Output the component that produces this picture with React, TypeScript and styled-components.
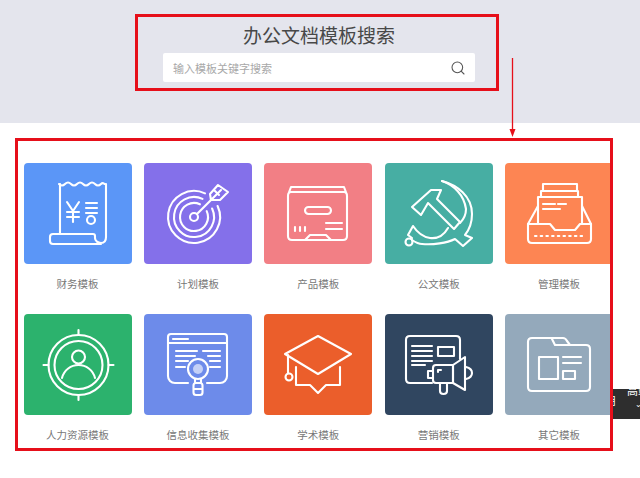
import React from "react";
import styled, { createGlobalStyle } from "styled-components";
import { Search } from "lucide-react";

const Global = createGlobalStyle`
  html, body { margin: 0; padding: 0; background: #fff; }
  body { font-family: "Noto Sans CJK SC", "Liberation Sans", sans-serif; }
`;

const Page = styled.div`
  position: relative;
  width: 640px;
  height: 478px;
  overflow: hidden;
  background: #fff;
`;

const HeaderBand = styled.header`
  height: 123px;
  box-sizing: border-box;
  padding: 14px 0 0 135px;
  background: #e4e5ed;
`;

const SearchFrame = styled.div`
  width: 364px;
  height: 77px;
  box-sizing: border-box;
  border: 3px solid #e60f1a;
  padding: 2px 21px 0 25px;
  display: flex;
  flex-direction: column;
  align-items: stretch;
`;

const Title = styled.h1`
  margin: 0;
  height: 34px;
  font-size: 19px;
  font-weight: 400;
  line-height: 31px;
  text-align: center;
  color: #484848;
`;

const SearchBox = styled.div`
  height: 29px;
  display: flex;
  align-items: center;
  justify-content: space-between;
  padding: 0 9px 0 10px;
  background: #fff;
  border-radius: 2px;
  color: #555;
`;

const Placeholder = styled.span`
  font-size: 11px;
  color: #a8a8a8;
`;

const Panel = styled.section`
  margin: 15px 0 0 15px;
  width: 598px;
  height: 313px;
  box-sizing: border-box;
  border: 3px solid #e60f1a;
  padding: 22px 0 0 5.5px;
  overflow: hidden;
  background: #fff;
`;

const Grid = styled.div`
  display: grid;
  grid-template-columns: repeat(5, 108px);
  column-gap: 12.4px;
  row-gap: 10px;
  width: 640px;
`;

const Item = styled.div`
  display: flex;
  flex-direction: column;
`;

const Tile = styled.div<{ $bg: string }>`
  width: 108px;
  height: 101px;
  border-radius: 4px;
  background: ${(p) => p.$bg};
`;

const Label = styled.div`
  height: 40px;
  line-height: 40px;
  text-align: center;
  font-size: 10.5px;
  color: #777;
`;

const Glyph = styled.svg`
  display: block;
  width: 108px;
  height: 101px;
  fill: none;
  stroke: #fff;
  stroke-width: 2.1;
  stroke-linecap: round;
  stroke-linejoin: round;
`;

const Arrow = styled.svg`
  position: absolute;
  left: 507px;
  top: 58px;
  width: 12px;
  height: 80px;
`;

const Chip = styled.div`
  position: absolute;
  left: 613px;
  top: 389px;
  width: 27px;
  height: 30px;
  background: #2e2e2e;
  color: #fff;
  font-size: 11px;
  line-height: 11px;
  overflow: hidden;
  display: flex;
`;

const ChipSide = styled.span`
  margin: 6px 0 0 -8px;
  width: 11px;
  flex: none;
`;

const ChipMain = styled.span`
  margin-top: -4px;
  padding-left: 11px;
  white-space: nowrap;
`;

const ChipCaret = styled.span`
  display: block;
  margin: 4px 0 0 8px;
  font-size: 8px;
  line-height: 8px;
`;

const Icons: Record<string, React.ReactNode> = {
  finance: (
    <Glyph viewBox="0 0 108 101">
      <path d="M35 21c2 2 4 2 6 0s4-2 6 0 4 2 6 0 4-2 6 0 4 2 6 0 4-2 6 0 4 2 6 0 3 0 4 0" />
      <path d="M36 21v50M82 21v53c0 4-2 6-5 6s-6-2-6-5v-2c0-1-1-2-2-2H29c-2 0-3 1-3 3v4c0 2 1 3 3 3h48" />
      <path d="M43 39l6 9 6-9M49 48v11M43 49h12M43 54h12" />
      <path d="M62 40h11M62 45h11M62 50h11" />
      <circle cx="67" cy="57" r="4" />
    </Glyph>
  ),
  plan: (
    <Glyph viewBox="0 0 108 101">
      <path d="M73.600 43A26 26 0 1 1 61 30.400" />
      <path d="M68.100 45.500A20 20 0 1 1 58.500 35.900" />
      <path d="M62.700 48.100A14 14 0 1 1 55.900 41.300" />
      <circle cx="50" cy="54" r="4" />
      <path d="M53 51l14-14" />
      <path d="M67 37l-1-6 8-9 10 7-8 8zM67 37l10-10M70 27l5 5" />
    </Glyph>
  ),
  product: (
    <Glyph viewBox="0 0 108 101">
      <path d="M24 33c0-3 1-4 3-4h53c2 0 3 1 3 4v40c0 3-1 4-4 4H28c-3 0-4-1-4-4zM24 32l3-8h53l3 8" />
      <rect x="41" y="44" width="26" height="7" rx="3.500" />
      <path d="M31 64v4M36 64v4M41 64v4M62 60h16M62 66h16" />
      <path d="M41 77l5-5h16l5 5" />
    </Glyph>
  ),
  official: (
    <Glyph viewBox="0 0 108 101">
      <path d="M27 44L46 27h10l-4 9 23 23-6 7-26-26-7 12z" />
      <path d="M57 18C72 22 87 33 87 51c0 8-3 16-7 21l7 3-9 8-8-7c-8 4-22 6-33 5-3 0-7-2-10-4" />
      <circle cx="24" cy="79" r="3.500" />
      <path d="M27 75l-4-3 5-9c4 6 10 11 17 12 8 1 14-3 18-10" />
      <path d="M57 18c12 4 22 14 24 28 0 5-2 10-6 14" />
    </Glyph>
  ),
  manage: (
    <Glyph viewBox="0 0 108 101">
      <path d="M23 61v15c0 3 1 4 4 4h55c3 0 4-1 4-4V61h-11l-5 6H50l-5-6z" />
      <path d="M23 61l10-18M86 61L77 43" />
      <path d="M33 61V34h44v27" />
      <path d="M36 34v-6h37v6M38 28v-7h34v7" />
      <path d="M38 41h12M53 41h8M38 46h17" />
      <path d="M30 73h50" strokeDasharray="1.500 4.200" />
    </Glyph>
  ),
  hr: (
    <Glyph viewBox="0 0 108 101">
      <circle cx="54.500" cy="51" r="30" />
      <circle cx="54.500" cy="51" r="24" />
      <path d="M54.500 16v5M54.500 81v5M19.500 51h5M84.500 51h5" />
      <circle cx="54.500" cy="43" r="6.500" />
      <path d="M38 64c2-8 9-13 16.500-13S69 56 71 64" />
    </Glyph>
  ),
  info: (
    <Glyph viewBox="0 0 108 101">
      <path d="M44 69H31c-4 0-7-3-7-7V23c0-2 1-3 3-3h53c2 0 3 1 3 3v39c0 4-3 7-7 7H63" />
      <path d="M24 29h59M29 25h15" />
      <path d="M32 37h21M32 42h19M32 47h12M32 53h9M59 37h17M64 42h12M66 47h10M66 53h10" />
      <circle cx="54" cy="55" r="10" />
      <circle cx="54" cy="55" r="5" fill="#fff" fillOpacity=".6" stroke="none" />
      <path d="M51 65v4h6v-4" />
      <rect x="49.500" y="69" width="9" height="12" rx="2.500" />
      <path d="M50 75h8" />
    </Glyph>
  ),
  academic: (
    <Glyph viewBox="0 0 108 101">
      <path d="M54 22l33 18-33 20-33-20z" />
      <path d="M32 53v18h14l8 8 8-8h14V53" />
      <path d="M24 41v18" />
      <circle cx="25" cy="63" r="3.500" />
    </Glyph>
  ),
  marketing: (
    <Glyph viewBox="0 0 108 101">
      <path d="M47 69H25c-3 0-4-1-4-4V26c0-3 1-4 4-4h46c3 0 4 1 4 4v19" />
      <path d="M27 32h20M27 37h20M27 42h20M27 47h20M27 51h13" />
      <rect x="53" y="33" width="16" height="9" />
      <path d="M68 51l12-8v33l-12-7z" />
      <path d="M48 54c0-2 1-3 3-3h17v18H51c-2 0-3-1-3-3z" />
      <path d="M48 57h-5v7h5M53 58v-2h3" />
      <path d="M55 69v8c0 2 1.500 3 3.500 3s3.500-1 3.500-3v-8" />
      <path d="M81 53c4 1 6 3 6 6s-2 5-6 6" />
    </Glyph>
  ),
  other: (
    <Glyph viewBox="0 0 108 101">
      <path d="M27 24h31c2 0 3 1 4 3l3 4h16c3 0 4 1 4 4v38c0 3-1 4-4 4H27c-3 0-4-1-4-4V28c0-3 1-4 4-4z" />
      <path d="M47 25l3 6h15" />
      <rect x="34" y="43" width="19" height="22" />
      <path d="M58 43h18M58 49h18" />
      <rect x="58" y="57" width="12" height="8" />
    </Glyph>
  ),
};

const items = [
  { key: "finance", label: "财务模板", bg: "#5b96f7" },
  { key: "plan", label: "计划模板", bg: "#8470ea" },
  { key: "product", label: "产品模板", bg: "#f27f85" },
  { key: "official", label: "公文模板", bg: "#47aea3" },
  { key: "manage", label: "管理模板", bg: "#fd8553" },
  { key: "hr", label: "人力资源模板", bg: "#2cb26d" },
  { key: "info", label: "信息收集模板", bg: "#6d8bea" },
  { key: "academic", label: "学术模板", bg: "#eb5e2b" },
  { key: "marketing", label: "营销模板", bg: "#304660" },
  { key: "other", label: "其它模板", bg: "#94a9bb" },
];

export default function App() {
  return (
    <Page>
      <Global />
      <HeaderBand>
        <SearchFrame>
          <Title>办公文档模板搜索</Title>
          <SearchBox>
            <Placeholder>输入模板关键字搜索</Placeholder>
            <Search size={16} strokeWidth={1.6} />
          </SearchBox>
        </SearchFrame>
      </HeaderBand>
      <Panel>
        <Grid>
          {items.map((it) => (
            <Item key={it.key}>
              <Tile $bg={it.bg}>{Icons[it.key]}</Tile>
              <Label>{it.label}</Label>
            </Item>
          ))}
        </Grid>
      </Panel>
      <Arrow viewBox="0 0 12 80">
        <path d="M5.500 0V72" stroke="#e60f1a" strokeWidth="1.3" fill="none" />
        <path d="M2.500 71h6l-3 8z" fill="#e60f1a" />
      </Arrow>
      <Chip>
        <ChipSide>用</ChipSide>
        <ChipMain>
          高端
          <ChipCaret>⌄</ChipCaret>
        </ChipMain>
      </Chip>
    </Page>
  );
}
